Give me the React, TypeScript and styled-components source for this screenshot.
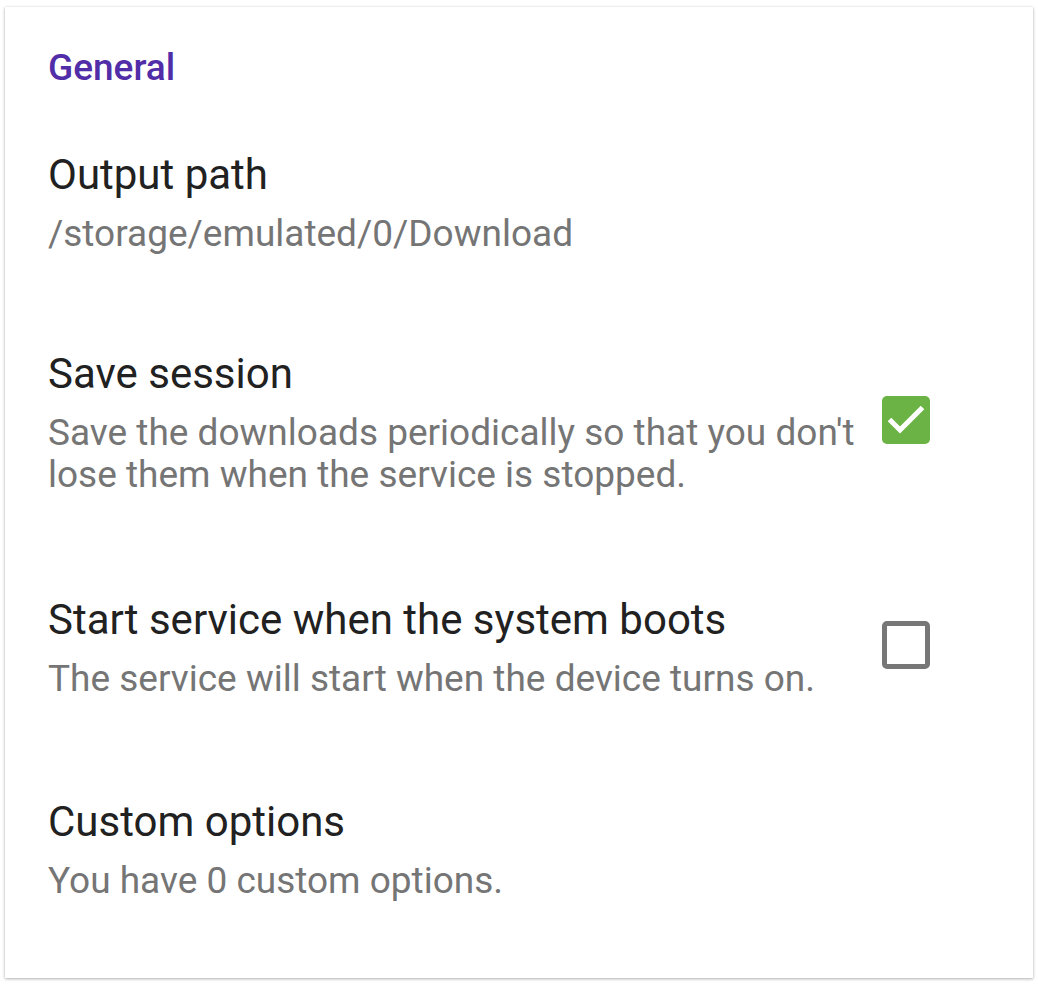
import React from "react";
import styled, { createGlobalStyle } from "styled-components";

const Global = createGlobalStyle`
  html, body { margin: 0; padding: 0; background: #ffffff; }
  body { font-family: Roboto, "Noto Sans", sans-serif; }
`;

const Page = styled.div`
  padding: 7px 5px 8px 5px;
`;

const Card = styled.div`
  background: #fff;
  height: 971px;
  box-sizing: border-box;
  box-shadow: 0 1px 3px rgba(0, 0, 0, 0.3), 0 0 1px rgba(0, 0, 0, 0.12);
  padding: 39px 103px 0 43px;
  display: flex;
  flex-direction: column;
`;

const Category = styled.div`
  color: #512da8;
  font-size: 37px;
  font-weight: 500;
  line-height: 44px;
  margin-bottom: 60px;
`;

const Row = styled.div<{ $gap: number }>`
  display: flex;
  align-items: center;
  justify-content: space-between;
  margin-bottom: ${(p) => p.$gap}px;
`;

const Texts = styled.div`
  display: flex;
  flex-direction: column;
  gap: 13px;
`;

const Title = styled.div`
  color: #212121;
  font-size: 42px;
  line-height: 50px;
`;

const Summary = styled.div`
  color: #757575;
  font-size: 37px;
  line-height: 42px;
`;

const Box = styled.div<{ $checked: boolean }>`
  width: 48px;
  height: 48px;
  box-sizing: border-box;
  border-radius: 5px;
  flex: none;
  margin: 0 0 6px 24px;
  display: flex;
  align-items: center;
  justify-content: center;
  background: ${(p) => (p.$checked ? "#6ab344" : "transparent")};
  border: ${(p) => (p.$checked ? "none" : "5px solid #777777")};
`;

function Check({ checked }: { checked: boolean }) {
  return (
    <Box $checked={checked}>
      {checked && (
        <svg width="48" height="48" viewBox="0 0 48 48">
          <path d="M7.5 23.5L18 34L40.5 11.5" fill="none" stroke="#fff" strokeWidth="5" />
        </svg>
      )}
    </Box>
  );
}

export default function App() {
  return (
    <>
      <Global />
      <Page>
        <Card>
          <Category>General</Category>
          <Row $gap={94}>
            <Texts>
              <Title>Output path</Title>
              <Summary>/storage/emulated/0/Download</Summary>
            </Texts>
          </Row>
          <Row $gap={99}>
            <Texts>
              <Title>Save session</Title>
              <Summary>
                Save the downloads periodically so that you don't
                <br />
                lose them when the service is stopped.
              </Summary>
            </Texts>
            <Check checked />
          </Row>
          <Row $gap={97}>
            <Texts>
              <Title>Start service when the system boots</Title>
              <Summary>The service will start when the device turns on.</Summary>
            </Texts>
            <Check checked={false} />
          </Row>
          <Row $gap={0}>
            <Texts>
              <Title>Custom options</Title>
              <Summary>You have 0 custom options.</Summary>
            </Texts>
          </Row>
        </Card>
      </Page>
    </>
  );
}
